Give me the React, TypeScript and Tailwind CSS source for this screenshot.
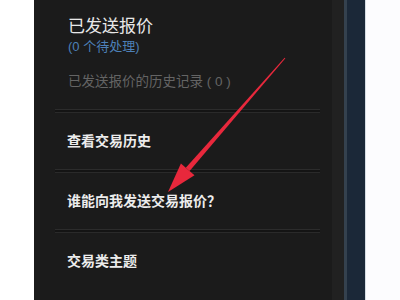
export default function App() {
  return (
    <div className="relative flex h-[300px] w-[400px] overflow-hidden bg-white font-['Liberation_Sans','Noto_Sans_CJK_SC',sans-serif]">
      <div className="w-[34px] shrink-0 bg-white" />

      <div className="flex w-[298px] shrink-0 flex-col bg-[#1b1b1b]">
        <div className="pl-[34px] pt-[16px]">
          <div className="text-[17px] leading-[22px] text-[#e8e8e8]">已发送报价</div>
          <div className="mt-[0px] text-[13px] leading-[18px] text-[#4d80b8]">(0 个待处理)</div>
          <div className="mt-[17px] text-[13.5px] leading-[18px] text-[#646464]">已发送报价的历史记录 ( 0 )</div>
        </div>

        <Divider className="mt-[18px]" />
        <Item>查看交易历史</Item>
        <Divider />
        <Item>谁能向我发送交易报价？</Item>
        <Divider />
        <Item>交易类主题</Item>
      </div>

      <div className="w-[12px] shrink-0 bg-[#212121]" />
      <div className="w-[3px] shrink-0 bg-[#34414e]" />
      <div className="w-[18px] shrink-0 bg-[#1b2838]" />
      <div className="w-[1px] shrink-0 bg-[#d6dde4]" />
      <div className="w-[34px] shrink-0 bg-[#fcfcfe]" />

      {/* red arrow pointing at the second item */}
      <svg className="pointer-events-none absolute inset-0" width="400" height="300" viewBox="0 0 400 300">
        <polygon
          points="285.4,58.3 189.6,171 185.8,167.8 284.6,57.7"
          fill="#e8283c"
        />
        <polygon points="168,192 194.5,175.3 180.9,163.5" fill="#e8283c" />
      </svg>
    </div>
  );
}

function Divider({ className = "" }: { className?: string }) {
  return (
    <div className={`ml-[21px] mr-[12px] h-[4px] border-t border-b border-t-[#2c2c2c] border-b-[#2a2a2a] bg-[#141414] ${className}`} />
  );
}

function Item({ children }: { children: React.ReactNode }) {
  return (
    <div className="flex h-[56px] items-center pl-[33px] text-[14px] font-bold text-[#ececec]">
      {children}
    </div>
  );
}
